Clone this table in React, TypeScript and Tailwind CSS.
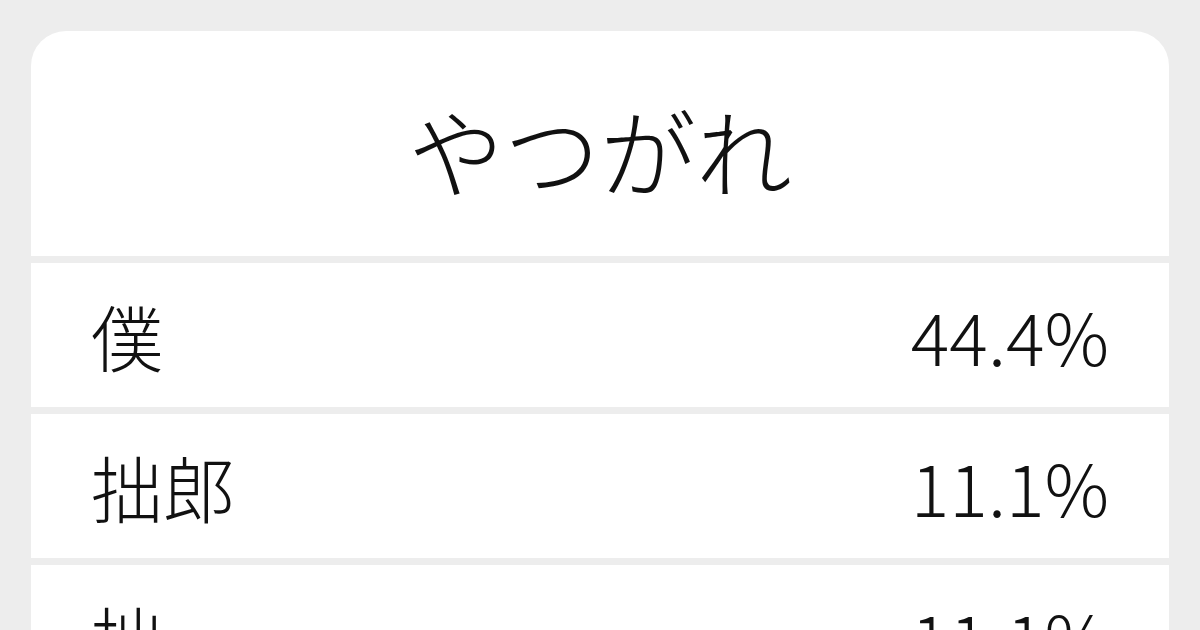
import React from 'react';

const rows = [
  { word: '僕', rate: '44.4%' },
  { word: '拙郎', rate: '11.1%' },
  { word: '拙', rate: '11.1%' },
];

export default function App() {
  return (
    <div
      className="h-[630px] w-[1200px] overflow-hidden bg-[#ededed] px-[31px] pt-[31px] text-[#111111]"
      style={{ fontFamily: '"Noto Sans CJK JP", "Noto Sans", sans-serif' }}
    >
      <div className="flex flex-col gap-[7px] overflow-hidden rounded-t-[35px]">
        {/* Header */}
        <div className="flex h-[225px] items-center justify-center bg-white pt-[10px]">
          <h1 className="text-[96px] font-light leading-none">やつがれ</h1>
        </div>

        {rows.map((r, i) => (
          <div
            key={i}
            className="flex h-[144px] items-center justify-between bg-white px-[60px]"
          >
            <span className="text-[72px] font-light leading-none">{r.word}</span>
            <span className="text-[72px] font-light leading-none">{r.rate}</span>
          </div>
        ))}
      </div>
    </div>
  );
}
